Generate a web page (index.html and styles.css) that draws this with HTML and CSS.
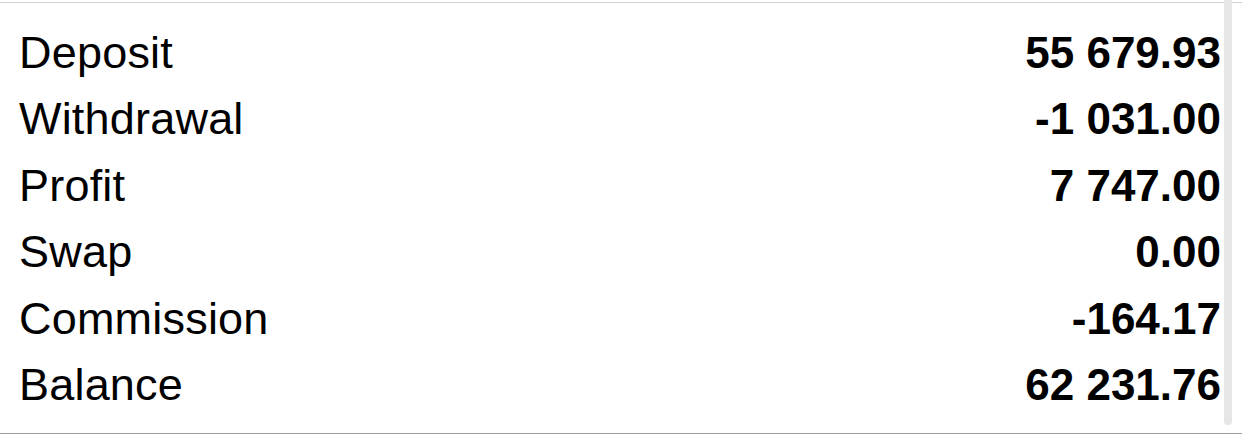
FILE: index.html
```html
<!DOCTYPE html>
<html lang="en">
<head>
    <meta charset="UTF-8">
    <title>Account summary</title>
    <link rel="stylesheet" href="styles.css">
</head>
<body>
    <div class="panel">
        <ul class="summary">
            <li><span class="label">Deposit</span><span class="value">55 679.93</span></li>
            <li><span class="label">Withdrawal</span><span class="value">-1 031.00</span></li>
            <li><span class="label">Profit</span><span class="value">7 747.00</span></li>
            <li><span class="label">Swap</span><span class="value">0.00</span></li>
            <li><span class="label">Commission</span><span class="value">-164.17</span></li>
            <li><span class="label">Balance</span><span class="value">62 231.76</span></li>
        </ul>
        <div class="scrollbar"></div>
    </div>
</body>
</html>
```

FILE: styles.css
```css
*{
    padding: 0;
    margin: 0;
    box-sizing: border-box;
}

html,body{
    background: #fff;
}

body{
    width: 1242px;
    height: 434px;
    overflow: hidden;
    font-family: "Liberation Sans", Arial, sans-serif;
    color: #000;
}

ul,li{
    list-style: none;
}

.panel{
    position: relative;
    margin-top: 2px;
    height: 432px;
    border-top: 1px solid #cfcfcf;
    border-bottom: 1px solid #9a9a9a;
}

.summary{
    padding: 17px 21px 0 19px;
}

.summary li{
    display: flex;
    justify-content: space-between;
    align-items: baseline;
    height: 66.4px;
    line-height: 66.4px;
    font-size: 44px;
}

.summary .label{
    font-size: 45px;
    letter-spacing: 0.2px;
}

.summary .value{
    font-weight: bold;
}

.scrollbar{
    position: absolute;
    top: -3px;
    right: 10px;
    width: 8px;
    height: 425px;
    background: #e6e6e6;
    border-radius: 0 0 4px 4px;
}
```
